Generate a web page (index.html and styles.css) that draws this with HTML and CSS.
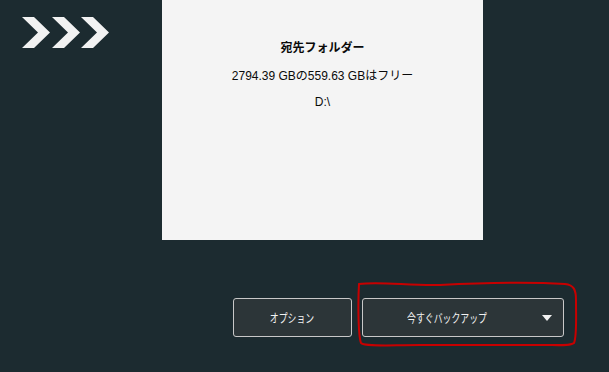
FILE: index.html
```html
<!DOCTYPE html>
<html lang="ja">
<head>
<meta charset="utf-8">
<link rel="stylesheet" href="styles.css">
</head>
<body>
<div class="app">
  <div class="top">
    <div class="logo">
      <svg width="88" height="32" viewBox="0 0 88 32">
        <polygon points="0,0 12,0 28,15.5 12,31 0,31 16,15.5" fill="#f2f2f2"/>
        <polygon points="30,0 42,0 58,15.5 42,31 30,31 46,15.5" fill="#f2f2f2"/>
        <polygon points="59,0 71,0 87,15.5 71,31 59,31 75,15.5" fill="#f2f2f2"/>
      </svg>
    </div>
    <div class="panel">
      <div class="title">宛先フォルダー</div>
      <div class="line">2794.39 GBの559.63 GBはフリー</div>
      <div class="line">D:\</div>
    </div>
  </div>
  <div class="actions">
    <button class="btn btn-option"><span class="narrow">オプション</span></button>
    <button class="btn btn-backup">
      <span class="label"><span class="narrow">今すぐバックアップ</span></span>
      <span class="caret"><svg width="10" height="6" viewBox="0 0 10 6"><polygon points="0,0 10,0 5,6" fill="#f2f2f2"/></svg></span>
    </button>
  </div>
  <svg class="annotation" width="609" height="372" viewBox="0 0 609 372">
    <path d="M359 284 C 380 281, 410 286, 440 285 C 480 283, 530 282, 565 284 C 574 285, 576 290, 576 300 C 576 320, 577 336, 574 343 C 570 346, 560 345, 540 345 L 420 345 C 390 345, 365 347, 361 343 C 358 335, 358 300, 359 284 Z" fill="none" stroke="#c80000" stroke-width="2"/>
  </svg>
</div>
</body>
</html>
```
FILE: styles.css
```css
html, body {
  margin: 0;
  padding: 0;
}
body {
  background: #1c2b30;
  font-family: "Liberation Sans", "Noto Sans CJK JP", sans-serif;
  width: 609px;
  height: 372px;
  overflow: hidden;
}
.app {
  position: relative;
  width: 609px;
  height: 372px;
}
.top {
  display: flex;
  height: 240px;
}
.logo {
  width: 140px;
  padding: 17px 0 0 22px;
}
.logo svg {
  display: block;
}
.panel {
  width: 321px;
  background: #f4f4f4;
  display: flex;
  flex-direction: column;
  align-items: center;
  padding-top: 40px;
  box-sizing: border-box;
  color: #0a0a0a;
}
.title {
  font-size: 12px;
  font-weight: bold;
  line-height: 16px;
  margin-bottom: 12px;
}
.line {
  font-size: 12px;
  line-height: 16px;
  margin-bottom: 10px;
}
.actions {
  display: flex;
  gap: 10px;
  margin-top: 58px;
  padding-left: 233px;
}
.btn {
  height: 39px;
  background: #2c3538;
  border: 1px solid #c8c8c8;
  border-radius: 3px;
  color: #f2f2f2;
  font-family: "Liberation Sans", "Noto Sans CJK JP", sans-serif;
  font-size: 12px;
  padding: 0;
  box-sizing: border-box;
}
.narrow {
  display: inline-block;
  transform: scaleX(0.74);
}
.btn-option {
  width: 119px;
}
.btn-backup {
  width: 202px;
  display: flex;
  align-items: center;
}
.btn-backup .label {
  flex: 1;
  text-align: center;
}
.btn-backup .caret {
  width: 32px;
  display: flex;
  justify-content: center;
  align-items: center;
}
.caret svg {
  display: block;
}
.annotation {
  position: absolute;
  left: 0;
  top: 0;
  pointer-events: none;
}
```
